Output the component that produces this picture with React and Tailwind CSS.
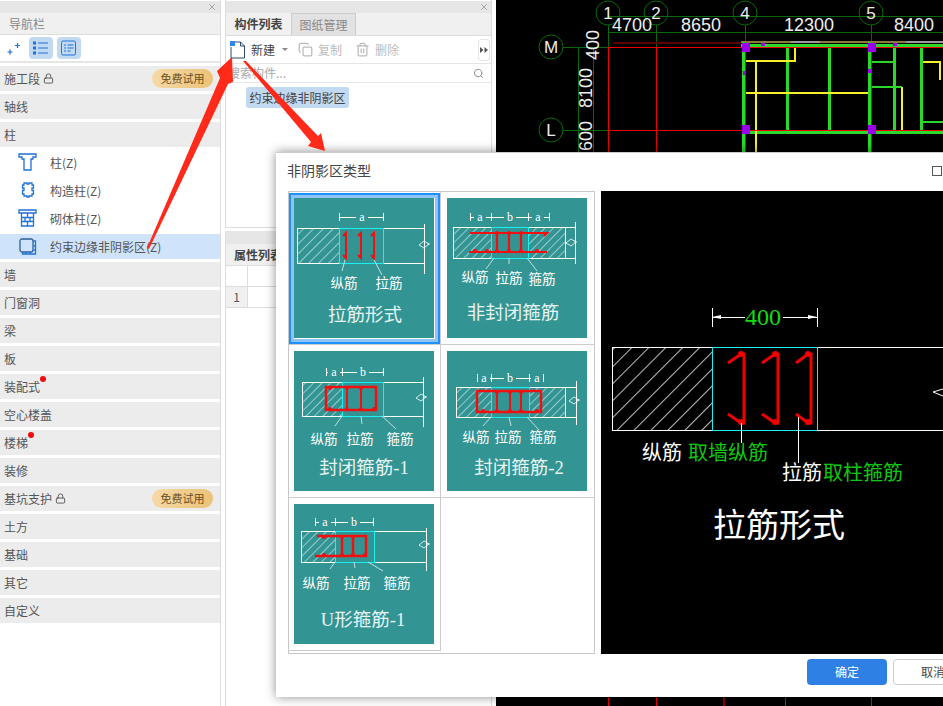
import { Lock, Search, X, Copy, Trash2 } from 'lucide-react';

const FONT = '"Noto Sans CJK SC", sans-serif';
const SVG_FONT = '"Liberation Serif", "Noto Sans CJK SC", serif';

const navTop = [
    { name: '施工段', lock: true, trial: true },
    { name: '轴线' },
    { name: '柱' },
];

const navBottom = [
    { name: '墙' },
    { name: '门窗洞' },
    { name: '梁' },
    { name: '板' },
    { name: '装配式', dot: 'left-[40px]' },
    { name: '空心楼盖' },
    { name: '楼梯', dot: 'left-[28px]' },
    { name: '装修' },
    { name: '基坑支护', lock: true, trial: true },
    { name: '土方' },
    { name: '基础' },
    { name: '其它' },
    { name: '自定义' },
];

function ColumnIcon({ type }) {
    return (
        <svg width="20" height="20" viewBox="0 0 20 20" fill="none" stroke="#1f72d8" strokeWidth="1.300">
            {type === 'plain' && <path d="M1 1h17v3h-3v2h-2v11h-7v-11h-2v-2h-3z" />}
            {type === 'gz' && <path d="M6 2h3v1h2v-1h3v2h1.500v3h-1.500v2.500h1.500v3.500h-1.500v2h-3v1h-2v-1h-3v-2h-1.500v-3.500h1.500v-2.500h-1.500v-3h1.500z" />}
            {type === 'qt' && <path d="M1 1h17v3h-2.500v13h-12v-13h-2.500zM3.500 4h12M3.500 8.500h12M3.500 12.500h12M9.500 4v4.500M7 8.500v4M12 8.500v4M9.500 12.500v4.500" />}
            {type === 'yy' && <>
                <rect x="2" y="2" width="13" height="13" rx="2" stroke="#2d5f95" />
                <path d="M15 4h2.500v13h-13v-2M17.500 9h-2M17.500 13h-2M8 17v-2M12 17v-2" />
            </>}
        </svg>
    );
}

const subItems = [
    { name: '柱(Z)', type: 'plain' },
    { name: '构造柱(Z)', type: 'gz' },
    { name: '砌体柱(Z)', type: 'qt' },
    { name: '约束边缘非阴影区(Z)', type: 'yy', active: true },
];

function NavRow({ item }) {
    return (
        <div className="relative h-[25px] mb-[3px] bg-[#ececec] flex items-center pl-[4px] pr-[7px] text-[12px] text-[#555]">
            <span>{item.name}</span>
            {item.lock && <Lock size={11} className="ml-[3px] text-[#555]" />}
            {item.dot && <span className={`absolute top-[2px] w-[6px] h-[6px] rounded-full bg-[#f20d0d] ${item.dot}`}></span>}
            {item.trial && (
                <span className="ml-auto h-[19px] w-[61px] rounded-full bg-gradient-to-r from-[#f6d9a6] to-[#ebc277] flex items-center justify-center text-[11px] text-[#6b4f1e]">
                    免费试用
                </span>
            )}
        </div>
    );
}

function Sidebar() {
    return (
        <div className="w-[221px] h-full border-r border-[#ddd] flex flex-col shrink-0">
            <div className="h-[12px] mt-px bg-[#e6e6e6] flex justify-end items-center pr-[3px]">
                <X size={10} className="text-[#999]" />
            </div>
            <div className="h-[22px] bg-[#f0f0f0] border-b border-[#ddd] pl-[9px] flex items-center text-[12px] text-[#888]">导航栏</div>
            <div className="h-[28px] border-b-2 border-[#e5e5e5] flex items-center pl-[7px] gap-[4px] mb-[3px]">
                <svg width="16" height="16" viewBox="0 0 16 16" fill="none" stroke="#1f72d8" strokeWidth="1.200" className="mr-[2px]">
                    <path d="M3 9.500v5M.5 12h5M10.500 3v5M8 5.500h5" />
                </svg>
                <div className="w-[24px] h-[22px] rounded-[4px] bg-[#c2d9f2] flex items-center justify-center">
                    <svg width="16" height="14" viewBox="0 0 16 14" fill="none" stroke="#1f72d8" strokeWidth="1">
                        <path d="M5 2h10M5 7h10M5 12h10" />
                        <rect x=".5" y="1" width="2" height="2" /><rect x=".5" y="6" width="2" height="2" /><rect x=".5" y="11" width="2" height="2" />
                    </svg>
                </div>
                <div className="w-[24px] h-[22px] rounded-[4px] bg-[#c2d9f2] flex items-center justify-center">
                    <svg width="16" height="16" viewBox="0 0 16 16" fill="none" stroke="#1f72d8" strokeWidth="1">
                        <rect x=".5" y="1" width="14" height="14" rx="1.500" />
                        <path d="M3 5h2M6.500 5h6M3 8h2M6.500 8h6M3 11h2M6.500 11h3" />
                    </svg>
                </div>
            </div>
            {navTop.map(item => <NavRow key={item.name} item={item} />)}
            <div className="-mt-[1px] mb-[3px]">
                {subItems.map(item => (
                    <div key={item.name} className={`flex items-center pl-[18px] text-[12px] text-[#555] ${item.active ? 'bg-[#cfe4fb] h-[25px] mt-[1px]' : 'h-[28px]'}`}>
                        <ColumnIcon type={item.type} />
                        <span className="ml-[12px]">{item.name}</span>
                    </div>
                ))}
            </div>
            {navBottom.map(item => <NavRow key={item.name} item={item} />)}
        </div>
    );
}

function ComponentPanel() {
    return (
        <div className="h-[228px] border-x border-b border-[#ddd] flex flex-col">
            <div className="h-[12px] mt-px bg-[#e6e6e6] flex justify-end items-center pr-[2px]">
                <X size={10} className="text-[#999]" />
            </div>
            <div className="h-[23px] bg-[#f0f0f0] border-b border-[#ddd] flex items-stretch text-[12px]">
                <div className="w-[65px] flex items-center justify-center font-bold text-[#444]">构件列表</div>
                <div className="w-[65px] bg-[#e2e2e2] border border-[#ccc] border-b-0 flex items-center justify-center text-[#888]">图纸管理</div>
            </div>
            <div className="h-[28px] border-b border-[#e5e5e5] flex items-center pl-[4px] pr-[1px] text-[12px]">
                <svg width="16" height="18" viewBox="0 0 16 18" fill="none" stroke="#2d4a6b" strokeWidth="1">
                    <path d="M1 6v11h13.500v-12l-4-4h-6M10.500 1v4h4" />
                    <rect x="0" y="0" width="5" height="5" fill="#2f86e8" stroke="none" />
                </svg>
                <span className="ml-[5px] text-[#444]">新建</span>
                <span className="ml-[7px] w-0 h-0 border-x-[3px] border-x-transparent border-t-[3px] border-t-[#888]"></span>
                <Copy size={15} className="ml-[10px] text-[#bbb]" />
                <span className="ml-[5px] text-[#bbb]">复制</span>
                <Trash2 size={15} className="ml-[13px] text-[#bbb]" />
                <span className="ml-[5px] text-[#bbb]">删除</span>
                <div className="ml-auto w-[12px] h-[22px] border border-[#e5e5e5] rounded-[3px] flex items-center justify-center">
                    <svg width="8" height="6" viewBox="0 0 8 6" fill="#555"><path d="M0 0l3.500 3L0 6zM4.500 0L8 3 4.500 6z" /></svg>
                </div>
            </div>
            <div className="h-[19px] border-b border-[#e5e5e5] flex items-center pl-[2px] pr-[7px] text-[12px] text-[#aaa]">
                <span>搜索构件...</span>
                <Search size={11} className="ml-auto text-[#888]" />
            </div>
            <div className="pl-[20px] pt-[4px]">
                <div className="flex items-center h-[21px] w-[103px] justify-center rounded-[3px] bg-[#c2d9f2] text-[12px] text-[#444]">约束边缘非阴影区</div>
            </div>
        </div>
    );
}

function PropertyPanel() {
    return (
        <div className="mt-[3px] flex-1 border-x border-[#ddd] flex flex-col">
            <div className="h-[13px] bg-[#e6e6e6]"></div>
            <div className="h-[22px] bg-[#f0f0f0] border-b border-[#ddd] flex items-center pl-[8px] text-[12px] font-bold text-[#444]">属性列表</div>
            <div className="h-[21px] flex">
                <div className="w-[22px] border-r border-b border-[#ddd]"></div>
                <div className="flex-1 border-b border-[#ddd]"></div>
            </div>
            <div className="h-[21px] flex text-[12px] text-[#555]">
                <div className="w-[22px] bg-[#f0f0f0] border-r border-b border-[#ddd] flex items-center justify-center">1</div>
                <div className="flex-1 border-b border-[#ddd]"></div>
            </div>
        </div>
    );
}

function CadDrawing() {
    const dark = '#0a6a0a';
    const axis = [[112, '1'], [160, '2'], [249, '4'], [375, '5']];
    const dims = [[136, '4700'], [205, '8650'], [313, '12300'], [418, '8400']];
    const green = '#2bd92b';
    const yellow = '#f5f02a';
    return (
        <svg width="447" height="706" viewBox="0 0 447 706" className="block">
            <g stroke={dark} fill="none">
                <circle cx="112" cy="13" r="12" /><circle cx="160" cy="13" r="12" />
                <circle cx="249" cy="13" r="12" /><circle cx="375" cy="13" r="12" />
                <circle cx="55" cy="47" r="12" /><circle cx="55" cy="130" r="12" />
            </g>
            <g shapeRendering="crispEdges" fill="none">
                <path d="M112 16H447M112 32H447M67 47H112M67 130H112M82 47V152M97 47V152M112 25V47M160 25V47M249 25V47M375 25V47" stroke={dark} />
                <path d="M117 43H245" stroke="#5a0000" strokeWidth="2" />
                <path d="M245 42H447" stroke="#8a7a3a" strokeWidth="2" />
                <path d="M295 42H324M410 42H447" stroke="#999" strokeWidth="2" />
                <path d="M245 45H447M250 132H447M247 42V152M373 42V152" stroke={green} strokeWidth="3" />
                <path d="M291 47V130M333 47V130M398 47V130M425 47V130" stroke={green} strokeWidth="3" />
                <path d="M376 62H398M376 87H406M427 122H447" stroke={green} strokeWidth="2" />
                <path d="M249 61H299V48M260 61V152M249 93H372M406 87V130M427 62H444V80" stroke={yellow} strokeWidth="2" />
                <path d="M112 47H447M112 130H447M112 47V152M160 47V152M249 47V152M375 47V152" stroke="#f00000" />
                <path d="M112 697V706M160 697V706M289 697V706M375 697V706" stroke="#f00000" />
                <path d="M228 697V706" stroke="#8a0000" strokeWidth="2" />
                <g fill="#9a00ee">
                    <rect x="246" y="43" width="8" height="9" /><rect x="372" y="43" width="8" height="9" />
                    <rect x="246" y="125" width="8" height="9" /><rect x="372" y="125" width="8" height="9" />
                    <rect x="265" y="43" width="4" height="3" /><rect x="397" y="43" width="4" height="3" />
                    <rect x="247" y="71" width="3" height="4" /><rect x="372" y="69" width="3" height="4" />
                </g>
            </g>
            <g fill="#eee" fontFamily='"Liberation Sans", sans-serif' textAnchor="middle">
                {axis.map(([x, t]) => <text key={x} x={x} y="19" fontSize="17">{t}</text>)}
                {dims.map(([x, t]) => <text key={x} x={x} y="31" fontSize="18">{t}</text>)}
                <text x="55" y="53" fontSize="17">M</text>
                <text x="55" y="136" fontSize="17">L</text>
                <text transform="translate(103 45) rotate(-90)" fontSize="18">400</text>
                <text transform="translate(96 88) rotate(-90)" fontSize="18">8100</text>
                <text transform="translate(96 136) rotate(-90)" fontSize="18">600</text>
            </g>
        </svg>
    );
}

function Hatch({ id, x, y, w, h, gap = 7, weight = 1 }) {
    return (
        <>
            <defs>
                <pattern id={id} width={gap} height={gap} patternUnits="userSpaceOnUse" patternTransform="rotate(45)">
                    <line x1="0" y1="0" x2="0" y2={gap} stroke="#fff" strokeWidth={weight} />
                </pattern>
            </defs>
            <rect x={x} y={y} width={w} height={h} fill={`url(#${id})`} />
        </>
    );
}

function Labels({ items, y, title, titleX, titleY }) {
    return (
        <g fontFamily={SVG_FONT} textAnchor="middle">
            {items.map(([x, t, dy = 0]) => <text key={t} x={x} y={y + dy} fill="#fff" fontSize="13.500">{t}</text>)}
            <text x={titleX} y={titleY} fill="#e6f5f2" fontSize="18.500">{title}</text>
        </g>
    );
}

function Dim({ y, x1, x2, label, lx }) {
    return (
        <g>
            <path d={`M${x1} ${y - 4}V${y + 4}M${x2} ${y - 4}V${y + 4}M${x1} ${y}H${x2}`} stroke="#fff" shapeRendering="crispEdges" />
            <rect x={lx - 6} y={y - 6} width="12" height="12" fill="#339494" />
            <text x={lx} y={y + 4} fill="#fff" fontSize="12" textAnchor="middle" fontFamily={SVG_FONT}>{label}</text>
        </g>
    );
}

// small red knobs where the bars cross
function Knobs({ points }) {
    return (
        <g fill="#f01010">
            {points.map(([x, y]) => <circle key={`${x}-${y}`} cx={x} cy={y} r="2" />)}
        </g>
    );
}

const Thumb = ({ children }) => (
    <svg width="140" height="140" viewBox="0 0 140 140" className="block bg-[#339494]" fill="none">{children}</svg>
);

function BreakMark({ x, y }) {
    return <path d={`M${x} ${y - 4}l-5 4 5 3 5-4zM${x + 3} ${y - 1}h3`} stroke="#fff" strokeWidth=".8" />;
}

function ThumbOne() {
    return (
        <Thumb>
            <Dim y={19} x1={45} x2={89} label="a" lx={68} />
            <Hatch id="h1" x={3} y={30} w={42} h={35} />
            <path d="M130 30H3V65H130M130 26V76" stroke="#fff" shapeRendering="crispEdges" />
            <rect x="45" y="30" width="44" height="35" stroke="#19f0f0" shapeRendering="crispEdges" />
            <path d="M49 38l3-3V60l-3-3M64 38l3-3V60l-3-3M77 38l3-3V60l-3-3" stroke="#f01010" strokeWidth="2" />
            <path d="M51 62l-3 11M80 62l8 15" stroke="#fff" strokeWidth=".7" />
            <BreakMark x={130} y={47} />
            <Labels items={[[50, '纵筋', 0], [95, '拉筋', 0]]} y={90} title="拉筋形式" titleX={71} titleY={123} />
        </Thumb>
    );
}

function ThumbTwo() {
    return (
        <Thumb>
            <Dim y={19} x1={23} x2={44} label="a" lx={33} />
            <Dim y={19} x1={44} x2={81} label="b" lx={63} />
            <Dim y={19} x1={81} x2={102} label="a" lx={91} />
            <Hatch id="h2a" x={6} y={29} w={38} h={31} gap={6} />
            <Hatch id="h2b" x={81} y={29} w={37} h={31} gap={6} />
            <path d="M128 29H6V60H128M118 29V60M128 24V66" stroke="#fff" shapeRendering="crispEdges" />
            <rect x="44" y="29" width="37" height="31" stroke="#19f0f0" shapeRendering="crispEdges" />
            <path d="M23 35H100l-3 3M22 54H100M50 34V54M62 34V54M74 34V54" stroke="#f01010" strokeWidth="2.200" />
            <Knobs points={[[28, 53], [40, 53], [50, 35], [62, 35], [74, 35], [50, 53], [62, 53], [74, 53], [90, 53]]} />
            <path d="M47 60l-8 11M62 60v6M80 60l10 13" stroke="#fff" strokeWidth=".7" />
            <BreakMark x={124} y={45} />
            <Labels items={[[28, '纵筋'], [62, '拉筋', 1], [95, '箍筋', 2]]} y={84} title="非封闭箍筋" titleX={66} titleY={121} />
        </Thumb>
    );
}

function ThumbThree() {
    return (
        <Thumb>
            <Dim y={21} x1={32} x2={48} label="a" lx={40} />
            <Dim y={21} x1={48} x2={89} label="b" lx={69} />
            <Hatch id="h3" x={8} y={31} w={40} h={34} gap={6} />
            <path d="M129 31H8V65H129M129 26V76" stroke="#fff" shapeRendering="crispEdges" />
            <rect x="48" y="31" width="41" height="34" stroke="#19f0f0" shapeRendering="crispEdges" />
            <rect x="32" y="36" width="50" height="23" stroke="#f01010" strokeWidth="2.500" />
            <path d="M53 36V59M67 36V59" stroke="#f01010" strokeWidth="2" />
            <Knobs points={[[36, 37], [53, 37], [67, 37], [36, 58], [53, 58], [67, 58], [80, 58]]} />
            <path d="M48 65l-7 10M67 65l1 8M88 65l14 13" stroke="#fff" strokeWidth=".7" />
            <BreakMark x={127} y={47} />
            <Labels items={[[30, '纵筋'], [66, '拉筋'], [106, '箍筋']]} y={93} title="封闭箍筋-1" titleX={70} titleY={123} />
        </Thumb>
    );
}

function ThumbFour() {
    return (
        <Thumb>
            <Dim y={27} x1={30} x2={44} label="a" lx={37} />
            <Dim y={27} x1={44} x2={82} label="b" lx={63} />
            <Dim y={27} x1={82} x2={96} label="a" lx={90} />
            <Hatch id="h4a" x={9} y={36} w={35} h={30} gap={6} />
            <Hatch id="h4b" x={82} y={36} w={36} h={30} gap={6} />
            <path d="M129 36H9V66H129M118 36V66M129 30V74" stroke="#fff" shapeRendering="crispEdges" />
            <rect x="44" y="36" width="38" height="30" stroke="#19f0f0" shapeRendering="crispEdges" />
            <rect x="30" y="40" width="64" height="21" stroke="#f01010" strokeWidth="2.500" />
            <path d="M50 40V61M63 40V61M74 40V61" stroke="#f01010" strokeWidth="2" />
            <Knobs points={[[50, 41], [63, 41], [74, 41], [36, 60], [50, 60], [63, 60], [74, 60], [90, 60]]} />
            <path d="M44 66l-8 9M62 66l2 9M80 66l12 13" stroke="#fff" strokeWidth=".7" />
            <BreakMark x={127} y={50} />
            <Labels items={[[29, '纵筋'], [61, '拉筋'], [96, '箍筋']]} y={91} title="封闭箍筋-2" titleX={72} titleY={123} />
        </Thumb>
    );
}

function ThumbFive() {
    return (
        <Thumb>
            <Dim y={18} x1={21} x2={41} label="a" lx={31} />
            <Dim y={18} x1={41} x2={79} label="b" lx={60} />
            <Hatch id="h5" x={7} y={27} w={34} h={31} gap={6} />
            <path d="M132 27H7V58H132M132 24V67" stroke="#fff" shapeRendering="crispEdges" />
            <rect x="41" y="27" width="39" height="31" stroke="#19f0f0" shapeRendering="crispEdges" />
            <path d="M23 32H72V52H21M48 32V52M59 32V52" stroke="#f01010" strokeWidth="2.500" />
            <Knobs points={[[30, 33], [48, 33], [59, 33], [30, 51], [48, 51], [59, 51], [71, 51]]} />
            <path d="M41 58l-5 7M60 58l1 6M74 58l15 9" stroke="#fff" strokeWidth=".7" />
            <BreakMark x={130} y={41} />
            <Labels items={[[22, '纵筋'], [63, '拉筋'], [103, '箍筋']]} y={84} title="U形箍筋-1" titleX={69} titleY={122} />
        </Thumb>
    );
}

function Preview() {
    return (
        <svg width="342" height="463" viewBox="0 0 342 463" className="block bg-black shrink-0" fill="none">
            <path d="M111 117V136M216 117V136M111 126H144M182 126H216" stroke="#fff" shapeRendering="crispEdges" />
            <path d="M111 126l9-2v4zM216 126l-9-2v4z" fill="#fff" />
            <text x="162" y="134" fill="#10dc10" fontSize="24" textAnchor="middle" fontFamily={SVG_FONT}>400</text>
            <Hatch id="hp" x={11} y={156} w={100} h={83} gap={12} weight={1.500} />
            <path d="M342 156H11V239H342" stroke="#fff" shapeRendering="crispEdges" />
            <rect x="111" y="156" width="105" height="83" stroke="#19f0f0" shapeRendering="crispEdges" />
            <path d="M127 172l13-9h3V232h-3l-13-9M161 172l13-9h3V232h-3l-13-9M195 172l12-9h3V232h-3l-12-9" stroke="#f00000" strokeWidth="3" />
            <g fill="#f00000">
                <circle cx="140" cy="163" r="3" /><circle cx="140" cy="231" r="3" />
                <circle cx="174" cy="163" r="3" /><circle cx="174" cy="231" r="3" />
                <circle cx="207" cy="163" r="3" /><circle cx="207" cy="231" r="3" />
            </g>
            <path d="M140 232v20M197 226v46" stroke="#fff" shapeRendering="crispEdges" />
            <path d="M342 198l-10 3 10 4" stroke="#fff" />
            <g fontFamily={SVG_FONT} fontSize="20">
                <text x="41" y="269" fill="#fff">纵筋</text>
                <text x="87" y="269" fill="#10c810">取墙纵筋</text>
                <text x="181" y="289" fill="#fff">拉筋</text>
                <text x="222" y="289" fill="#10c810">取柱箍筋</text>
                <text x="112" y="346" fill="#fff" fontSize="33">拉筋形式</text>
            </g>
        </svg>
    );
}

function TypeDialog() {
    return (
        <div className="absolute left-[276px] top-[152px] w-[667px] h-[545px] bg-white border-t border-[#ccc] shadow-[0_0_10px_rgba(0,0,0,0.45)] flex flex-col">
            <div className="h-[38px] pb-[3px] flex items-center justify-between pl-[11px] pr-[1px] text-[14px] text-[#444]">
                <span>非阴影区类型</span>
                <span className="w-[10px] h-[10px] border border-[#555]"></span>
            </div>
            <div className="flex pl-[12px] gap-[6px]">
                <div className="w-[307px] h-[463px] shrink-0 border border-[#c8c8c8] bg-white grid grid-cols-[152px_1fr] grid-rows-[153px_153px_155px]">
                    <div className="border-r border-b border-[#ccc] pt-[1px]">
                        <div className="w-[151px] h-[151px] border-[2px] border-[#1e90ff]">
                            <div className="w-[147px] h-[147px] border-[3px] border-[#8fc4f5]"><ThumbOne /></div>
                        </div>
                    </div>
                    <div className="border-b border-[#ccc] pl-[6px] pt-[6px]"><ThumbTwo /></div>
                    <div className="border-r border-b border-[#ccc] pl-[5px] pt-[6px]"><ThumbThree /></div>
                    <div className="border-b border-[#ccc] pl-[6px] pt-[6px]"><ThumbFour /></div>
                    <div className="h-[153px] border-r border-b border-[#ccc] pl-[5px] pt-[6px]"><ThumbFive /></div>
                    <div></div>
                </div>
                <Preview />
            </div>
            <div className="flex pl-[531px] gap-[6px] mt-[5px] text-[12px]">
                <button className="w-[80px] h-[26px] shrink-0 rounded-[4px] bg-[#2f80e4] text-white">确定</button>
                <button className="w-[80px] h-[26px] shrink-0 rounded-[4px] border border-[#ccc] bg-white text-[#444]">取消</button>
            </div>
        </div>
    );
}

export default function App() {
    return (
        <div className="relative w-[943px] h-[706px] overflow-hidden bg-white flex" style={{ fontFamily: FONT }}>
            <Sidebar />
            <div className="w-[267px] ml-[4px] h-full flex flex-col shrink-0">
                <ComponentPanel />
                <PropertyPanel />
            </div>
            <div className="ml-[4px] flex-1 bg-black">
                <CadDrawing />
            </div>
            <TypeDialog />
            {/* red annotation arrows */}
            <svg width="943" height="706" viewBox="0 0 943 706" className="absolute left-0 top-0 pointer-events-none">
                <path d="M147 248L220 78 217 71 232 57 233 82 228 84 149 249z" fill="#ff2a1a" />
                <path d="M243 61L246 61 318 136 321 133 325 151 308 146 311 142z" fill="#ff2a1a" />
            </svg>
        </div>
    );
}
